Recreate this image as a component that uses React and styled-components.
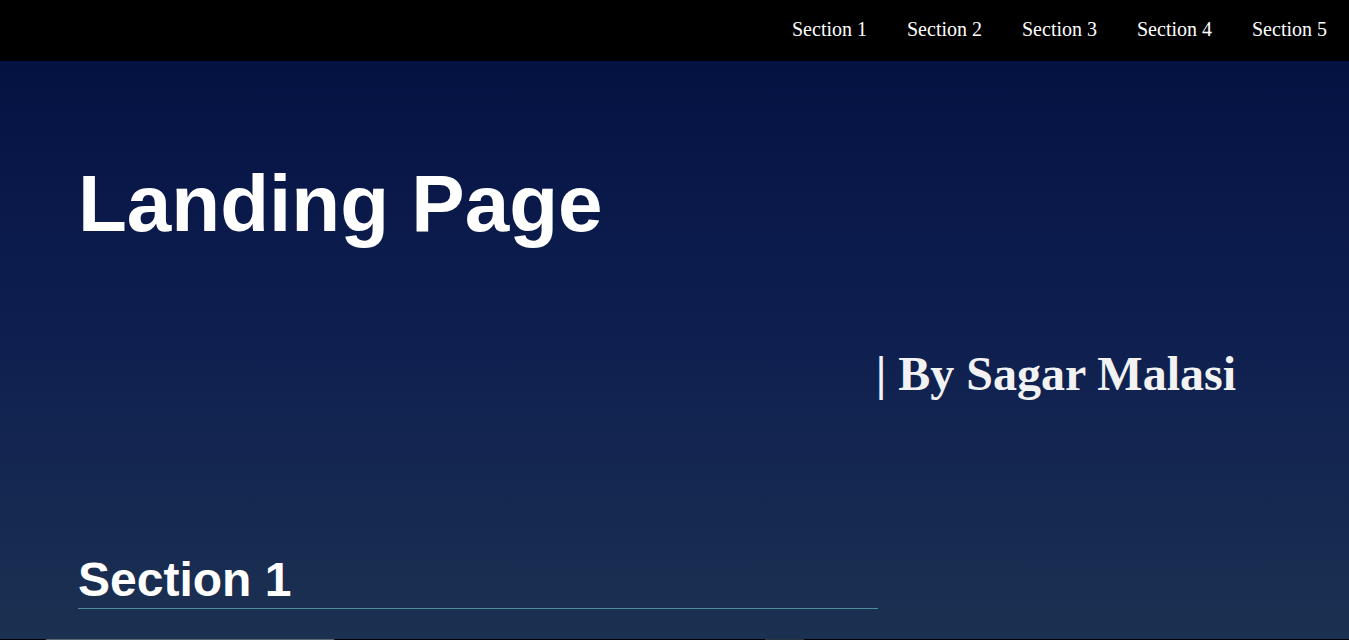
import React from 'react';
import styled, { createGlobalStyle } from 'styled-components';

const GlobalStyle = createGlobalStyle`
  html, body {
    margin: 0;
    padding: 0;
    background: #000;
  }
  body {
    font-family: "Liberation Serif", "Times New Roman", serif;
    overflow: hidden;
  }
`;

const NavBar = styled.header`
  height: 61px;
  background: #000;
  display: flex;
  justify-content: flex-end;
  align-items: flex-start;
  padding: 19px 22px 0 0;
  box-sizing: border-box;
`;

const NavList = styled.ul`
  display: flex;
  gap: 40px;
  margin: 0;
  padding: 0;
  list-style: none;
`;

const NavLink = styled.a`
  color: #fff;
  font-size: 20px;
  line-height: 20px;
  text-decoration: none;
  font-family: "Liberation Serif", "Times New Roman", serif;
`;

const Main = styled.main`
  background: linear-gradient(to bottom, #041242 0%, #0f2050 50%, #1b3151 100%);
  padding: 103px 0 30px 78px;
`;

const Title = styled.h1`
  margin: 0;
  color: #fff;
  font-family: "Liberation Sans", Arial, sans-serif;
  font-weight: 700;
  font-size: 80px;
  line-height: 80px;
`;

const Byline = styled.p`
  margin: 106px 0 0;
  padding-right: 113px;
  text-align: right;
  color: #f2f2f2;
  font-family: "Liberation Serif", "Times New Roman", serif;
  font-weight: 700;
  font-size: 48px;
  line-height: 48px;
`;

const SectionHeading = styled.h2`
  width: 800px;
  margin: 158px 0 0;
  padding-bottom: 4px;
  border-bottom: 1px solid #4a8f98;
  color: #fff;
  font-family: "Liberation Sans", Arial, sans-serif;
  font-weight: 700;
  font-size: 48px;
  line-height: 48px;
`;

const EdgeStrip = styled.div`
  height: 1px;
  display: flex;
  background: #02030a;
`;

const StripBit = styled.span`
  margin-left: ${p => p.$left}px;
  width: ${p => p.$width}px;
  background: ${p => p.$color};
`;

const links = ['Section 1', 'Section 2', 'Section 3', 'Section 4', 'Section 5'];

export default function App() {
  return (
    <>
      <GlobalStyle />
      <NavBar>
        <nav>
          <NavList>
            {links.map(l => (
              <li key={l}><NavLink href="#">{l}</NavLink></li>
            ))}
          </NavList>
        </nav>
      </NavBar>
      <Main>
        <Title>Landing Page</Title>
        <Byline>| By Sagar Malasi</Byline>
        <SectionHeading>Section 1</SectionHeading>
      </Main>
      <EdgeStrip>
        <StripBit $left={46} $width={288} $color="#5d6570" />
        <StripBit $left={431} $width={39} $color="#2c3340" />
      </EdgeStrip>
    </>
  );
}
